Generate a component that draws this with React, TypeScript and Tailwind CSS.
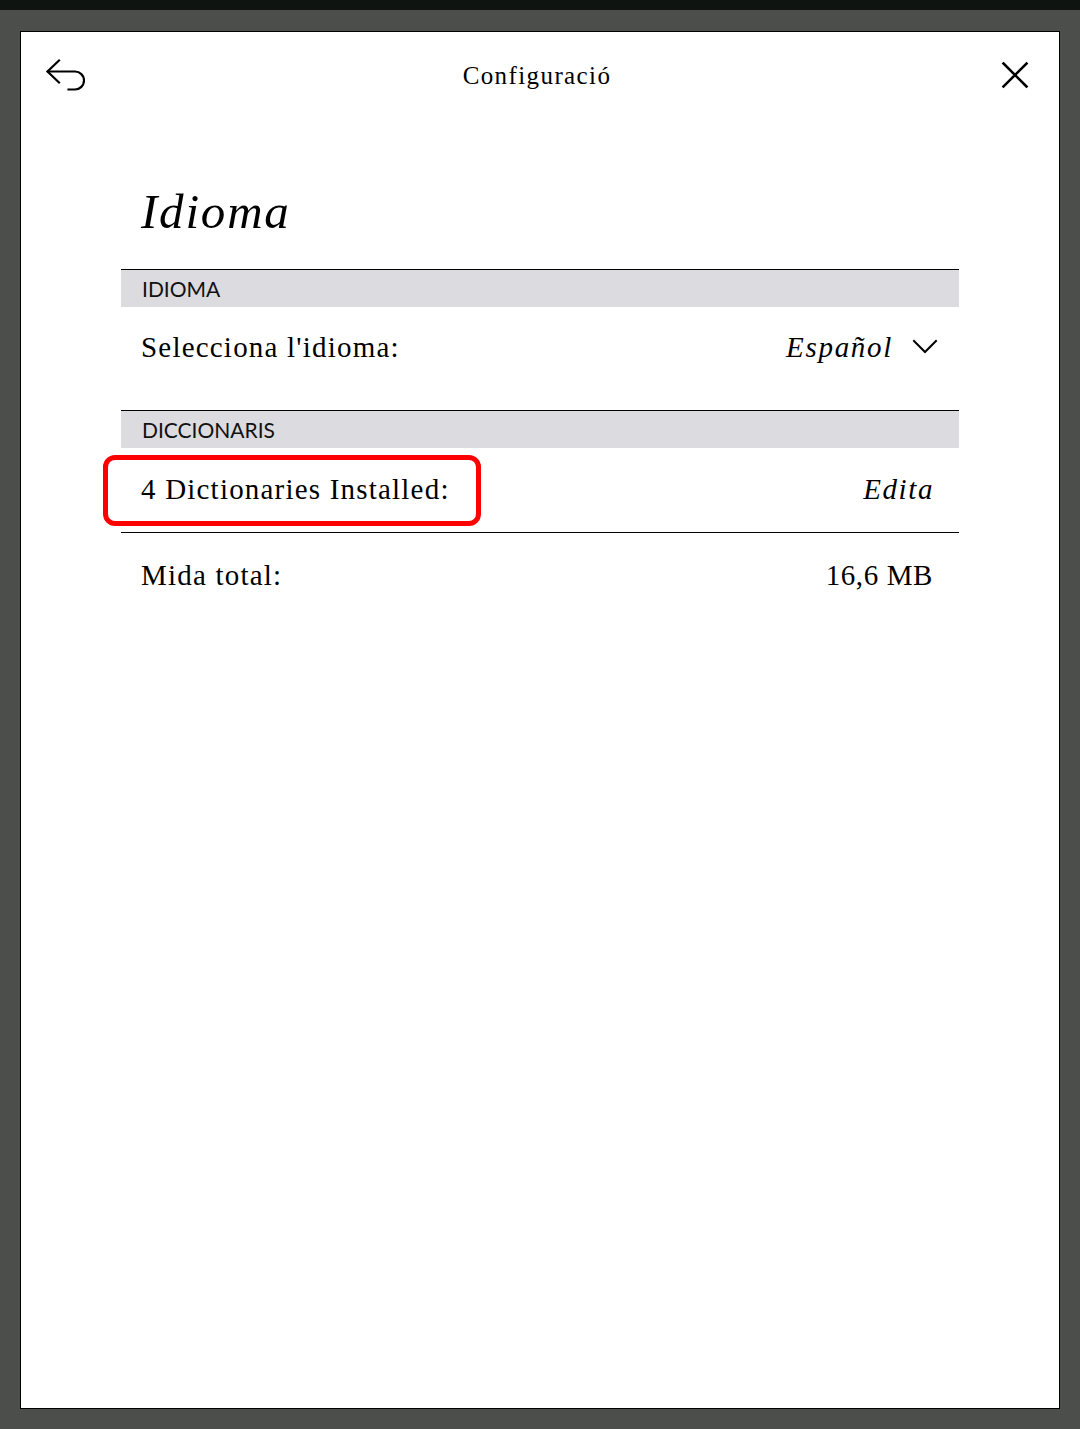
const serif = { fontFamily: '"Liberation Serif", "DejaVu Serif", serif' }

function BackIcon() {
  return (
    <svg width="40" height="34" viewBox="44 56 40 34" fill="none" stroke="#000" strokeWidth="2.2" strokeLinecap="square">
      <path d="M58 58.5 L46.5 69.5 L58 80.5" />
      <path d="M47 69.5 H74 A9 9 0 0 1 74 87.5 H67.5" />
    </svg>
  )
}

function CloseIcon() {
  return (
    <svg width="30" height="30" viewBox="1001 60 30 30" fill="none" stroke="#000" strokeWidth="2.6" strokeLinecap="square">
      <path d="M1004.5 63.5 L1027.5 86.5 M1027.5 63.5 L1004.5 86.5" />
    </svg>
  )
}

function Chevron() {
  return (
    <svg width="26" height="16" viewBox="913 342 26 16" fill="none" stroke="#000" strokeWidth="2" strokeLinecap="square">
      <path d="M915 344 L926 355 L937 344" />
    </svg>
  )
}

function SectionHeader({ label }: { label: string }) {
  return (
    <div className="border-t border-black">
      <div
        className="h-[37px] bg-[#dcdbdf] pl-[21px] flex items-center text-[21px] text-[#111]"
        style={{ fontFamily: 'Lato, "Open Sans", sans-serif' }}>
        {label}
      </div>
    </div>
  )
}

export default function App() {
  return (
    <div className="min-h-[1429px] bg-[#4c4e4b] flex flex-col">
      <div className="h-[10px] bg-[#0f1410]" />
      <div className="flex-1 flex px-[20px] pt-[21px] pb-[20px]">
        <div className="flex-1 bg-white border border-black flex flex-col text-black" style={serif}>
          {/* Header */}
          <div className="h-[86px] grid grid-cols-[1fr_auto_1fr] items-center">
            <div className="pl-[24px] flex">
              <BackIcon />
            </div>
            <div className="text-[25px] leading-none tracking-[1.4px] pr-[6px]">Configuració</div>
            <div className="pr-[29px] flex justify-end">
              <CloseIcon />
            </div>
          </div>

          <div className="mx-[100px]">
            <h1 className="pl-[20px] pt-[70px] pb-[33px] text-[49px] leading-[48px] italic tracking-[1.8px]">Idioma</h1>

            <SectionHeader label="IDIOMA" />
            <div className="h-[103px] pt-[26px] pl-[20px] pr-[21px] flex items-start justify-between text-[29px] leading-[28px] tracking-[1.2px]">
              <span>Selecciona l'idioma:</span>
              <span className="flex items-center gap-[21px]">
                <span className="italic tracking-[1.7px] -mr-[2px]">Español</span>
                <Chevron />
              </span>
            </div>

            <SectionHeader label="DICCIONARIS" />
            <div className="relative h-[85px] pt-[27px] pl-[20px] pr-[27px] flex items-start justify-between text-[29px] leading-[28px] tracking-[1.2px] border-b border-black">
              <span>4 Dictionaries Installed:</span>
              <span className="italic tracking-[1.6px] -mr-[2px]">Edita</span>
              <div className="absolute left-[-18px] top-[7px] w-[378px] h-[71px] border-[5px] border-[#ff0000] rounded-[12px]" />
            </div>
            <div className="pt-[28px] pl-[20px] pr-[27px] flex items-start justify-between text-[29px] leading-[28px] tracking-[1.2px]">
              <span>Mida total:</span>
              <span className="tracking-[0.6px] -mr-[1px]">16,6 MB</span>
            </div>
          </div>
        </div>
      </div>
    </div>
  )
}
